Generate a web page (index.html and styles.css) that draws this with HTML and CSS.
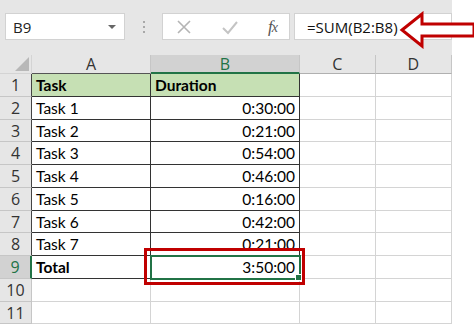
FILE: index.html
```html
<!DOCTYPE html>
<html lang="en">

<head>
    <meta charset="UTF-8">
    <meta name="viewport" content="width=device-width, initial-scale=1.0">
    <title>SUM of durations</title>
    <link rel="stylesheet" href="styles.css">
</head>

<body>
    <div class="sheet">
        <div class="toolbar">
            <div class="name-box">
                <span>B9</span>
                <span class="caret"></span>
            </div>
            <div class="grip">
                <i></i><i></i><i></i>
            </div>
            <div class="buttons">
                <svg class="btn-icon" width="16" height="16" viewBox="0 0 16 16">
                    <path d="M2 2 L14 14 M14 2 L2 14" stroke="#b4b4b4" stroke-width="1.6" fill="none" />
                </svg>
                <svg class="btn-icon" width="18" height="16" viewBox="0 0 18 16">
                    <path d="M2 9 L7 14 L16 3" stroke="#c4c4c4" stroke-width="2" fill="none" />
                </svg>
                <span class="fx"><i>f</i><i class="x">x</i></span>
            </div>
            <div class="formula">=SUM(B2:B8)</div>
        </div>

        <div class="grid">
            <!-- column headers -->
            <div class="corner"><span class="tri"></span></div>
            <div class="col-head col-a">A</div>
            <div class="col-head active">B</div>
            <div class="col-head">C</div>
            <div class="col-head">D</div>

            <div class="row-head">1</div>
            <div class="cell tbl title">Task</div>
            <div class="cell tbl title">Duration</div>
            <div class="cell"></div>
            <div class="cell"></div>

            <div class="row-head">2</div>
            <div class="cell tbl">Task 1</div>
            <div class="cell tbl num">0:30:00</div>
            <div class="cell"></div>
            <div class="cell"></div>

            <div class="row-head">3</div>
            <div class="cell tbl">Task 2</div>
            <div class="cell tbl num">0:21:00</div>
            <div class="cell"></div>
            <div class="cell"></div>

            <div class="row-head">4</div>
            <div class="cell tbl">Task 3</div>
            <div class="cell tbl num">0:54:00</div>
            <div class="cell"></div>
            <div class="cell"></div>

            <div class="row-head">5</div>
            <div class="cell tbl">Task 4</div>
            <div class="cell tbl num">0:46:00</div>
            <div class="cell"></div>
            <div class="cell"></div>

            <div class="row-head">6</div>
            <div class="cell tbl">Task 5</div>
            <div class="cell tbl num">0:16:00</div>
            <div class="cell"></div>
            <div class="cell"></div>

            <div class="row-head">7</div>
            <div class="cell tbl">Task 6</div>
            <div class="cell tbl num">0:42:00</div>
            <div class="cell"></div>
            <div class="cell"></div>

            <div class="row-head">8</div>
            <div class="cell tbl">Task 7</div>
            <div class="cell tbl num">0:21:00</div>
            <div class="cell"></div>
            <div class="cell"></div>

            <div class="row-head active">9</div>
            <div class="cell tbl bold">Total</div>
            <div class="cell tbl num selected">3:50:00<span class="handle"></span><span class="callout"></span></div>
            <div class="cell"></div>
            <div class="cell"></div>

            <div class="row-head">10</div>
            <div class="cell"></div>
            <div class="cell"></div>
            <div class="cell"></div>
            <div class="cell"></div>

            <div class="row-head">11</div>
            <div class="cell"></div>
            <div class="cell"></div>
            <div class="cell"></div>
            <div class="cell"></div>
        </div>

        <svg class="arrow" width="78" height="38" viewBox="0 0 78 38">
            <path d="M4 19 L24 3 L24 13 L76 13 L76 25 L24 25 L24 35 Z" fill="#ffffff" stroke="#c00000" stroke-width="3" stroke-linejoin="miter" />
        </svg>
    </div>
</body>

</html>
```

FILE: styles.css
```css
body {
    margin: 0;
    background: #ffffff;
    font-family: Lato, "Open Sans", Arial, sans-serif;
    color: #000000;
}

.sheet {
    position: relative;
    width: 452px;
}

.toolbar {
    height: 55px;
    box-sizing: border-box;
    padding: 13px 0 0 5px;
    background: #e6e6e6;
    display: flex;
    align-items: flex-start;
}

.name-box,
.buttons,
.formula {
    height: 27px;
    box-sizing: border-box;
    background: #ffffff;
    border: 1px solid #d2d2d2;
    display: flex;
    align-items: center;
}

.name-box {
    width: 120px;
    padding: 0 8px 0 7px;
    justify-content: space-between;
    font-family: "Open Sans", sans-serif;
    font-size: 15px;
    color: #222222;
}

.caret {
    width: 0;
    height: 0;
    border-left: 4px solid transparent;
    border-right: 4px solid transparent;
    border-top: 4px solid #666666;
}

.grip {
    width: 37px;
    height: 27px;
    display: flex;
    flex-direction: column;
    align-items: center;
    justify-content: center;
    gap: 3px;
}

.grip i {
    width: 2px;
    height: 2px;
    background: #a8a8a8;
}

.buttons {
    width: 128px;
    padding: 0 12px 0 13px;
    justify-content: space-between;
}

.fx {
    font-family: "Liberation Serif", serif;
    font-size: 17px;
    color: #555555;
    letter-spacing: -1px;
}

.fx .x {
    font-size: 14px;
}

.formula {
    margin-left: 4px;
    flex: 1;
    padding-left: 12px;
    font-family: "Open Sans", sans-serif;
    font-size: 15px;
    color: #111111;
}

.grid {
    display: grid;
    grid-template-columns: 32px 119px 149px 75.5px 76.5px;
    grid-template-rows: 19px repeat(11, 22.75px);
}

.grid > div {
    box-sizing: border-box;
    border-right: 1px solid #d4d4d4;
    border-bottom: 1px solid #d4d4d4;
}

.corner {
    background: #e6e6e6;
    position: relative;
}

.tri {
    position: absolute;
    right: 2px;
    bottom: 2px;
    width: 0;
    height: 0;
    border-left: 14px solid transparent;
    border-bottom: 14px solid #b8b8b8;
}

.col-head {
    background: #e6e6e6;
    border-right-color: #c6c6c6 !important;
    border-bottom-color: #b0b0b0 !important;
    text-align: center;
    font-family: "Open Sans", sans-serif;
    font-size: 16px;
    line-height: 19px;
    color: #333333;
}

.col-head.col-a {
    border-bottom-color: #555555 !important;
}

.col-head.active {
    background: #d2d2d2;
    color: #217346;
    border-bottom: 2px solid #217346 !important;
}

.row-head {
    background: #e6e6e6;
    border-right-color: #444444 !important;
    border-bottom-color: #c6c6c6 !important;
    text-align: center;
    font-family: "Open Sans", sans-serif;
    font-size: 16px;
    line-height: 22px;
    color: #333333;
}

.row-head:nth-child(n+51) {
    border-right-color: #c6c6c6 !important;
}

.row-head.active {
    background: #d2d2d2;
    color: #217346;
    border-right: 2px solid #217346 !important;
}

.cell {
    font-size: 15.5px;
    line-height: 22px;
    padding: 0 4px;
    white-space: nowrap;
}

.grid > .tbl {
    border-right-color: #333333;
    border-bottom-color: #333333;
}

.title {
    background: #c6e0b4;
    font-weight: bold;
}

.bold {
    font-weight: bold;
}

.num {
    text-align: right;
}

.selected {
    position: relative;
    outline: 2px solid #217346;
    outline-offset: -1px;
}

.handle {
    position: absolute;
    right: -3px;
    bottom: -3px;
    width: 5px;
    height: 5px;
    background: #217346;
    border: 1px solid #ffffff;
}

.callout {
    position: absolute;
    left: -7px;
    top: -8px;
    right: -6px;
    bottom: -7px;
    border: 3px solid #c00000;
}

.arrow {
    position: absolute;
    left: 398px;
    top: 11px;
}
```
